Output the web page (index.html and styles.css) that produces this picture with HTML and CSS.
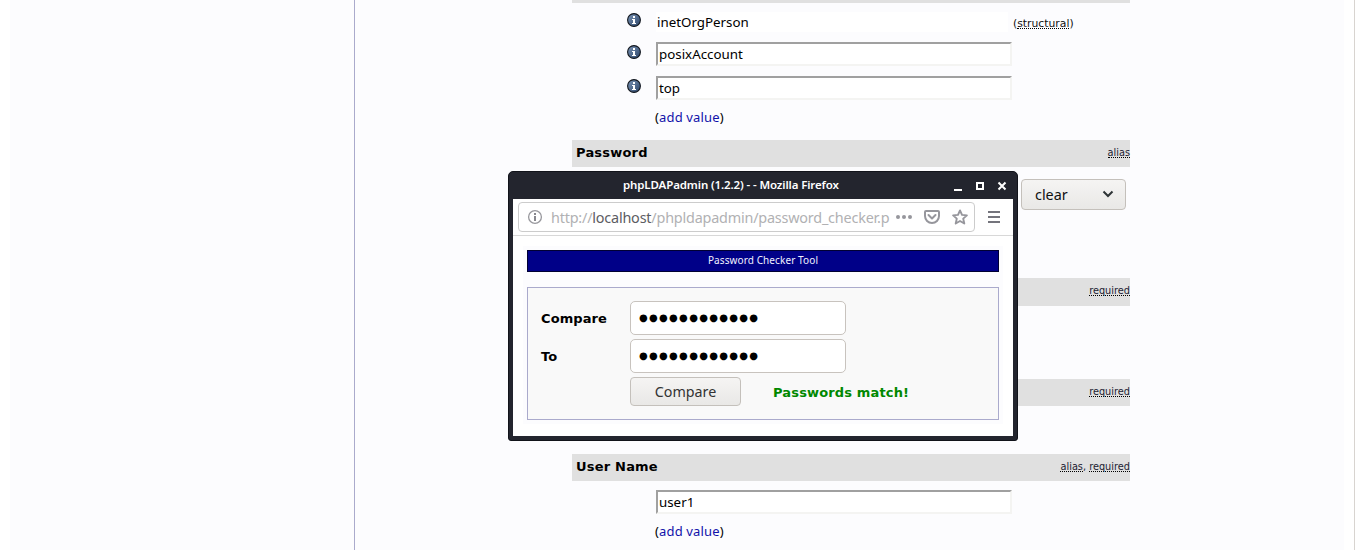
FILE: index.html
```html
<!DOCTYPE html>
<html lang="en">
<head>
<meta charset="utf-8">
<title>phpLDAPadmin (1.2.2)</title>
<link rel="stylesheet" href="styles.css">
</head>
<body>
<svg width="0" height="0" class="defs"><defs>
<linearGradient id="ball" x1="0" y1="0" x2="1" y2="1"><stop offset="0" stop-color="#7d97b8"/><stop offset="1" stop-color="#2b4468"/></linearGradient>
<symbol id="info" viewBox="0 0 14 14"><circle cx="7" cy="7" r="6.4" fill="url(#ball)" stroke="#10151c" stroke-width="1.1"/><path d="M6 3h2v2H6zM5 6h3v4h1v1H5v-1h1V7H5z" fill="#fff"/></symbol>
</defs></svg>
<div class="page">
  <nav class="tree"></nav>
  <main class="entry">
    <div class="form">
      <div class="bar bar-cut"></div>
      <div class="values">
        <div class="row first"><svg class="info"><use href="#info"/></svg><div class="field plain">inetOrgPerson</div><span class="structural">(<span class="dots">structural</span>)</span></div>
        <div class="row second"><svg class="info"><use href="#info"/></svg><div class="field inset">posixAccount</div></div>
        <div class="row third"><svg class="info"><use href="#info"/></svg><div class="field inset">top</div></div>
        <div class="add">(<a>add value</a>)</div>
      </div>
      <div class="bar"><b>Password</b><small><span class="dots">alias</span></small></div>
      <div class="password"><div class="select"><span>clear</span><svg width="12" height="8" viewBox="0 0 12 8"><path d="M1.5 1.5 6 6l4.500-4.500" fill="none" stroke="#2e3436" stroke-width="2"/></svg></div></div>
      <div class="bar tall"><b></b><small><span class="dots">required</span></small></div>
      <div class="gap-a"></div>
      <div class="bar"><b></b><small><span class="dots">required</span></small></div>
      <div class="gap-b"></div>
      <div class="bar"><b>User Name</b><small><span class="dots">alias</span>, <span class="dots">required</span></small></div>
      <div class="row user"><div class="field inset">user1</div></div>
      <div class="add last">(<a>add value</a>)</div>
    </div>
  </main>
</div>
<section class="window">
  <header class="title"><span class="caption">phpLDAPadmin (1.2.2) - - Mozilla Firefox</span>
    <svg class="controls" width="54" height="12" viewBox="0 0 54 12"><path d="M0 9h8v2H0z" fill="#fff"/><path d="M23 3h6v6h-6z" fill="none" stroke="#fff" stroke-width="2"/><path d="m44.500 2.500 7 7m0-7-7 7" stroke="#fff" stroke-width="2"/></svg>
  </header>
  <div class="toolbar">
    <div class="url">
      <svg width="16" height="16" viewBox="0 0 16 16"><circle cx="8" cy="8" r="6.400" fill="none" stroke="#98989d" stroke-width="1.300"/><path d="M7 4h2v2H7zM7 7h2v5H7z" fill="#88888e"/></svg>
      <span class="address">http://<em>localhost</em>/phpldapadmin/password_checker.p</span>
      <svg class="actions" width="76" height="18" viewBox="0 0 76 18"><g fill="#96969c"><circle cx="3" cy="9" r="2"/><circle cx="9" cy="9" r="2"/><circle cx="15" cy="9" r="2"/></g><g fill="none" stroke="#96969c" stroke-width="2" stroke-linejoin="round"><path d="M26 3h12q1 0 1 1v4a7 7 0 0 1-14 0V4q0-1 1-1z"/><path d="m28.500 7 3.500 3.500L35.500 7" stroke-linecap="round"/><path d="m60 2.400 2 4.500 4.900.5-3.700 3.200 1.100 4.900-4.300-2.500-4.300 2.500 1.100-4.900-3.700-3.200 4.900-.5z" stroke-width="1.900"/></g></svg>
    </div>
    <svg class="burger" width="12" height="12" viewBox="0 0 12 12"><path d="M0 1h12M0 6h12M0 11h12" stroke="#74747c" stroke-width="2"/></svg>
  </div>
  <div class="tool">
    <div class="tool-page">
      <h1>Password Checker Tool</h1>
      <div class="checker">
        <b>Compare</b><div class="secret">●●●●●●●●●●●●</div>
        <b>To</b><div class="secret">●●●●●●●●●●●●</div>
        <span></span><div class="result"><div class="button">Compare</div><strong>Passwords match!</strong></div>
      </div>
    </div>
  </div>
</section>
</body>
</html>
```
FILE: styles.css
```css
* { box-sizing: border-box; }
body { margin: 0; width: 1355px; height: 550px; overflow: hidden; background: #fff; font: 13px "Noto Sans", sans-serif; color: #000; position: relative; white-space: nowrap; }
svg { display: block; flex: none; }
.defs { position: absolute; }
.page { display: flex; height: 550px; padding: 0 10px; border-right: 1px solid #d8d4d0; }
.tree { width: 345px; flex: none; background: #fcfcfe; border-right: 1px solid #aaaacc; }
.entry { flex: 1; background: #fcfcfe; padding-left: 217px; }
.form { width: 558px; }
.bar { height: 27px; background: #e0e0e0; display: flex; justify-content: space-between; padding-left: 4px; line-height: 25px; font-family: "DejaVu Sans", sans-serif; }
.bar b { font-size: 13px; letter-spacing: .2px; }
.bar small { font-size: 9.750px; color: #223; line-height: 25px; }
.bar-cut { height: 3px; }
.tall { height: 28px; }
.dots { display: inline-block; line-height: 8px; border-bottom: 1px dotted #000; }
.values { height: 137px; padding-top: 9px; }
.row { display: flex; align-items: flex-start; padding-left: 55px; }
.info { width: 14px; height: 14px; margin-right: 15px; }
.first { height: 30px; }
.first .info { margin-top: 1px; }
.second { height: 34px; }
.second .info, .third .info { margin-top: 3px; }
.third { height: 30px; }
.field { font-size: 13.330px; }
.plain { width: 352px; height: 20px; line-height: 20px; padding-left: 1px; background: #fff; }
.inset { width: 356px; height: 24px; line-height: 21px; padding-left: 1px; background: #fff; border: 2px solid #f4f4f2; border-top-color: #a0a0a0; border-left-color: #a0a0a0; }
.structural { font: 10.800px/23px "DejaVu Sans", sans-serif; margin-left: 5px; color: #111; }
.structural .dots { line-height: 9px; }
.add { padding-left: 83px; line-height: 22px; height: 22px; letter-spacing: .15px; }
.last { margin-top: 3px; }
.add a { color: #1212aa; }
.password { height: 111px; padding: 12px 4px 0 0; display: flex; justify-content: flex-end; }
.select { width: 105px; height: 31px; border: 1px solid #c4c0bb; border-radius: 4px; background: linear-gradient(#f5f4f3, #e9e8e6); display: flex; align-items: center; justify-content: space-between; padding: 0 11px 0 13px; font-size: 14.400px; line-height: 20px; color: #111; }
.select svg { margin-bottom: 2px; }
.gap-a { height: 73px; }
.gap-b { height: 48px; }
.user { padding: 9px 0 0 84px; height: 36px; }
.window { position: absolute; left: 508px; top: 171px; width: 510px; height: 270px; background: #23252e; border: 1px solid #11131a; border-radius: 5px 5px 3px 3px; padding: 0 4px 4px; display: flex; flex-direction: column; }
.title { height: 27px; flex: none; color: #fff; display: flex; align-items: center; padding: 0 0 1px 110px; }
.caption { font-size: 11.500px; font-weight: 600; width: 216px; letter-spacing: -.12px; margin-bottom: 2px; }
.controls { margin: 1px 0 0 115px; }
.toolbar { height: 37px; flex: none; background: #fff; border-bottom: 1px solid #d8d8d8; display: flex; padding: 3px 0 0 5px; }
.url { width: 457px; height: 30px; border: 1px solid #ccc; border-radius: 4px; display: flex; align-items: center; padding-left: 8px; }
.address { color: #b1b1b3; font-size: 14.400px; letter-spacing: -.2px; width: 339px; margin-left: 8px; }
.address em { color: #5c5c62; font-style: normal; }
.actions { margin-left: 5px; overflow: visible; }
.actions g + g { transform: translateX(5px); }
.burger { margin: 9px 0 0 13px; }
.tool { flex: 1; background: #fff; padding: 10px; }
.tool-page { height: 178px; background: #fcfcfe; padding: 4px; }
.tool h1 { margin: 0 0 15px; height: 22px; border: 1px solid #000033; color: #f0f0ff; background: #000088; font-weight: 400; font-size: 10px; letter-spacing: .1px; line-height: 19px; text-align: center; }
.checker { height: 133px; border: 1px solid #aaaacc; background: #f9f9f9; display: grid; grid-template-columns: 89px 1fr; grid-template-rows: 34px 34px 29px; row-gap: 4px; padding: 13px; }
.checker b { font: bold 13px/35px "DejaVu Sans", sans-serif; letter-spacing: .1px; }
.secret { width: 216px; height: 34px; border: 1px solid #c8c3be; border-radius: 5px; background: #fff; padding-left: 8px; font: 10px/31px "DejaVu Sans", sans-serif; letter-spacing: 1.300px; }
.result { display: flex; align-items: center; }
.button { width: 111px; height: 29px; border: 1px solid #c4c0bb; border-radius: 4px; background: linear-gradient(#f5f4f3, #e9e8e6); color: #333; text-align: center; line-height: 28px; font-size: 14.300px; }
.result strong { margin: 2px 0 0 32px; color: #080; font: bold 13px "DejaVu Sans", sans-serif; letter-spacing: .15px; }
```
